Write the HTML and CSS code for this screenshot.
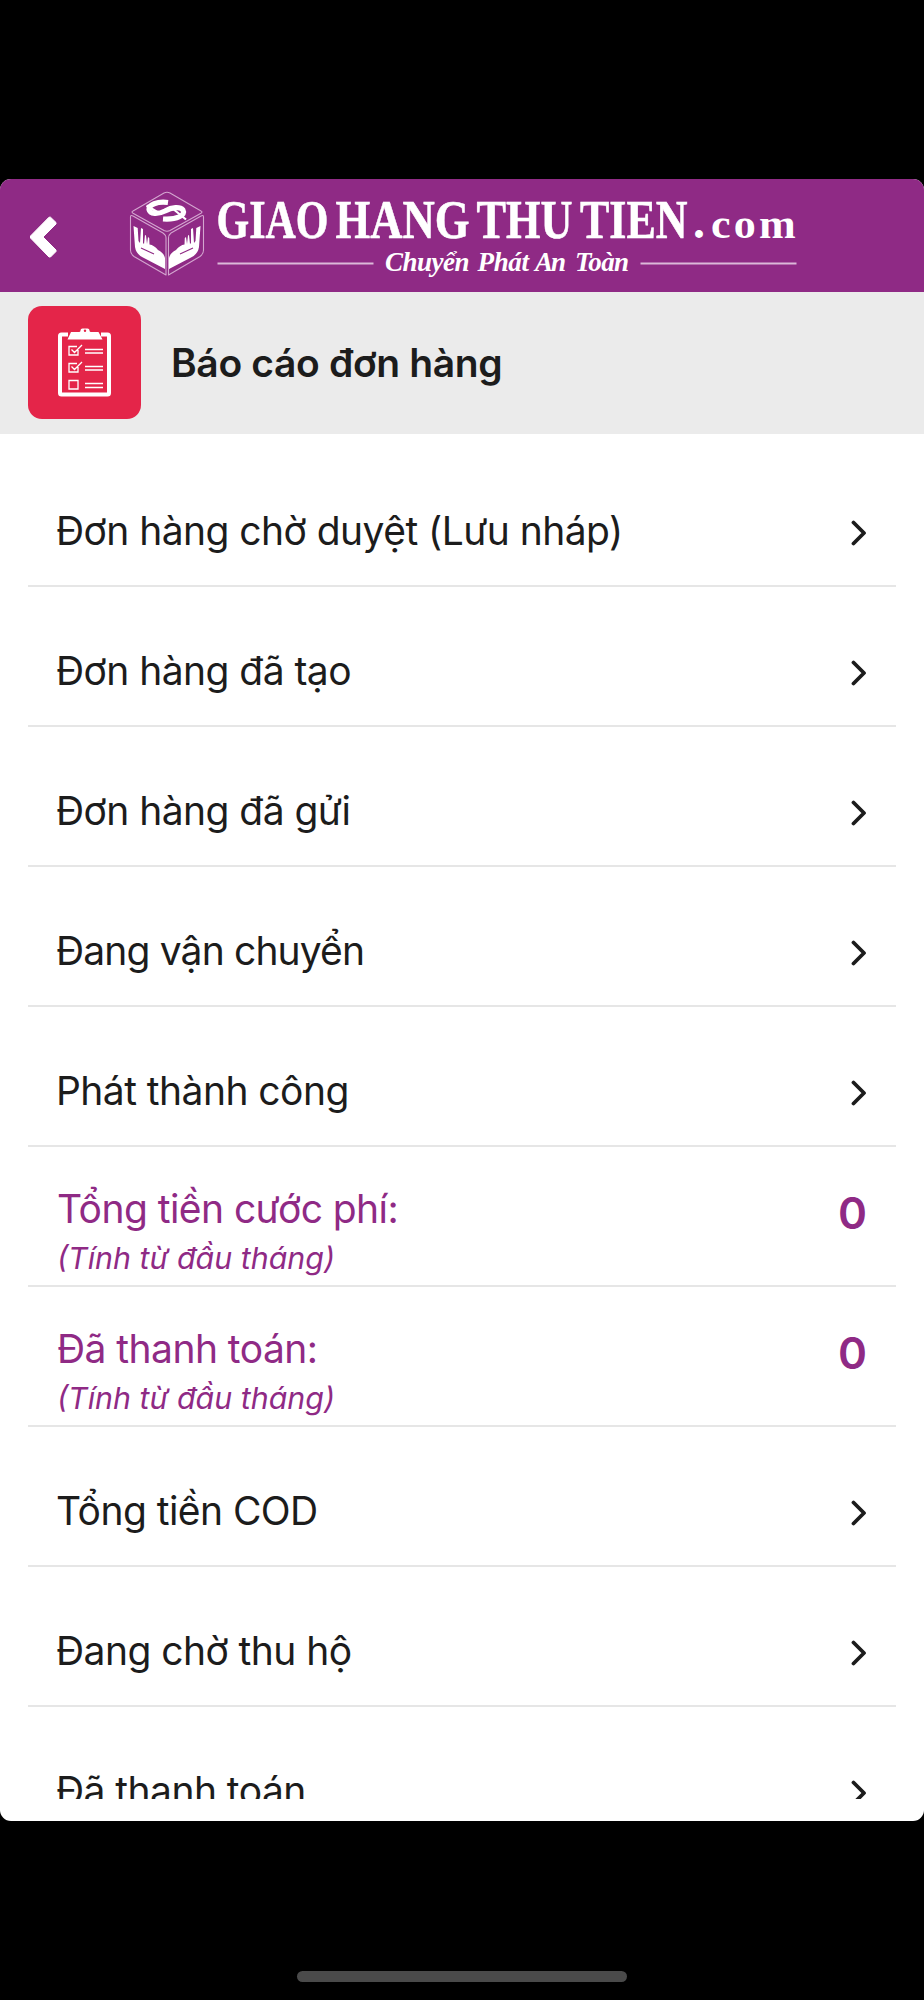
FILE: index.html
```
<!DOCTYPE html>
<html lang="vi">
<head>
    <meta charset="UTF-8">
    <meta name="viewport" content="width=device-width, initial-scale=1.0">
    <title>Báo cáo đơn hàng</title>
    <link rel="stylesheet" href="styles.css">
</head>
<body>
<div class="app">
    <header class="header">
        <svg class="back" viewBox="0 0 28 42" width="28" height="42">
            <path d="M20.5 1.2 L26 6.5 L26 8 L13 21 L26 34 L26 35.500 L20.500 41 L19 41 L0.500 22 L0.500 20 L19 1.200 Z" fill="#fff" stroke="#fff" stroke-linejoin="round"/>
        </svg>
        <svg class="logo" viewBox="128 185 672 100" width="672" height="100">
            <!-- box -->
            <g fill="none" stroke="#d3a5cf" stroke-width="1.1" stroke-linejoin="round">
                <path d="M164 193 Q167 191.500 170 193 L201 211 Q203 212 201 213.200 L170 230.500 Q167 232 164 230.500 L133 213.200 Q131 212 133 211 Z"/>
                <path d="M130.500 217 Q130.500 214.500 133 216 L163 233 Q166 235 166 238 L166 275 L134 256.500 Q130.500 254 130.500 250 Z"/>
                <path d="M203.500 217 Q203.500 214.500 201 216 L171 233 Q168.500 235 168.500 238 L168.500 275 L200 256.500 Q203.500 254 203.500 250 Z"/>
            </g>
            <!-- dollar sign lying on the lid -->
            <g fill="none" stroke="#fff">
                <path d="M168 202.500 C157 201 148.500 205 149 209.500 C150 214.500 158 214.500 165 211 C172 207 180 206.500 183 210 C186 215 177 220 163 219" stroke-width="5.200"/>
                <path d="M146.500 205.500 L159 213 M172 208 L186 219.500" stroke-width="2.200"/>
            </g>
            <!-- hands -->
            <g fill="#fff">
                <path d="M133.500 226 L137.700 228 L138.500 241 L140 243 L141 228 L143 229 L143 243 L144 244 L145 235 L146 235.500 L147 244 L148 237 L149.200 238 L149.500 244.500 Q154 245 158 250 Q164 253 165 258 L165 269 L143 257.500 Q136 254 135 247 Z"/>
                <path d="M200.500 226 L196.300 228 L195.500 241 L194 243 L193 228 L191 229 L191 243 L190 244 L189 235 L188 235.500 L187 244 L186 237 L184.800 238 L184.500 244.500 Q180 245 176 250 Q170 253 169 258 L169 269 L191 257.500 Q198 254 199 247 Z"/>
            </g>
            <path d="M141 248 L154 254 M193 248 L180 254" stroke="#8f2a85" stroke-width="1.200"/>
            <g class="brand">
                <text x="216.500" y="237.500" textLength="112" lengthAdjust="spacingAndGlyphs">GIAO</text>
                <text x="335.500" y="237.500" textLength="134" lengthAdjust="spacingAndGlyphs">HANG</text>
                <text x="476.500" y="237.500" textLength="96" lengthAdjust="spacingAndGlyphs">THU</text>
                <text x="580" y="237.500" textLength="107.500" lengthAdjust="spacingAndGlyphs">TIEN</text>
            </g>
            <text class="dot" x="693" y="238">.</text>
            <text class="domain" x="711" y="238" textLength="88" lengthAdjust="spacingAndGlyphs">com</text>
            <g class="slogan">
                <text x="385" y="271" textLength="84.500">Chuyển</text>
                <text x="477.500" y="271" textLength="51.500">Phát</text>
                <text x="535" y="271" textLength="31">An</text>
                <text x="575" y="271" textLength="54">Toàn</text>
            </g>
            <path d="M217.500 263.500 H373.500 M640.500 263.500 H796.500" stroke="#dcb8d9" stroke-width="2"/>
        </svg>
    </header>

    <div class="title-bar">
        <div class="title-icon">
            <svg viewBox="0 0 56 72" width="56" height="72">
                <path d="M11 7.500 H4.500 Q3 7.500 3 9 V66 Q3 67.500 4.500 67.500 H50.500 Q52 67.500 52 66 V9 Q52 7.500 50.500 7.500 H44" fill="none" stroke="#fff" stroke-width="4"/>
                <path d="M10.500 12.500 L14 5 H22 Q23.500 5 23.500 3.500 Q23.500 1.500 25.500 1.500 H30.500 Q32.500 1.500 32.500 3.500 Q32.500 5 34 5 H41.500 L45.500 12.500 Z" fill="#fff"/>
                <circle cx="28" cy="3.800" r="1.200" fill="#e42549"/>
                <g fill="none" stroke="#fff" stroke-width="1.300">
                    <path d="M21 23 V28 H12 V19.500 H20 M14.500 22.500 L17.500 25.500 L25 18"/>
                    <path d="M21 40 V45 H12 V36.500 H20 M14.500 39.500 L17.500 42.500 L25 35"/>
                    <path d="M12 53.500 H21 V62 H12 Z"/>
                    <path d="M28 22.500 H46 M28 26 H46 M28 39.500 H46 M28 43 H46 M28 56.500 H46 M28 60.500 H46"/>
                </g>
            </svg>
        </div>
        <h1>Báo cáo đơn hàng</h1>
    </div>

    <div class="list">
        <div class="row">
            <span class="label">Đơn hàng chờ duyệt (Lưu nháp)</span>
            <svg class="arrow" viewBox="0 0 16 26" width="16" height="26"><path d="M2.500 2.500 L13 13 L2.500 23.500"/></svg>
        </div>
        <div class="row">
            <span class="label">Đơn hàng đã tạo</span>
            <svg class="arrow" viewBox="0 0 16 26" width="16" height="26"><path d="M2.500 2.500 L13 13 L2.500 23.500"/></svg>
        </div>
        <div class="row">
            <span class="label">Đơn hàng đã gửi</span>
            <svg class="arrow" viewBox="0 0 16 26" width="16" height="26"><path d="M2.500 2.500 L13 13 L2.500 23.500"/></svg>
        </div>
        <div class="row">
            <span class="label tight">Đang vận chuyển</span>
            <svg class="arrow" viewBox="0 0 16 26" width="16" height="26"><path d="M2.500 2.500 L13 13 L2.500 23.500"/></svg>
        </div>
        <div class="row">
            <span class="label">Phát thành công</span>
            <svg class="arrow" viewBox="0 0 16 26" width="16" height="26"><path d="M2.500 2.500 L13 13 L2.500 23.500"/></svg>
        </div>
        <div class="row total">
            <div>
                <div class="label">Tổng tiền cước phí:</div>
                <div class="note">(Tính từ đầu tháng)</div>
            </div>
            <span class="value">0</span>
        </div>
        <div class="row total">
            <div>
                <div class="label">Đã thanh toán:</div>
                <div class="note">(Tính từ đầu tháng)</div>
            </div>
            <span class="value">0</span>
        </div>
        <div class="row">
            <span class="label">Tổng tiền COD</span>
            <svg class="arrow" viewBox="0 0 16 26" width="16" height="26"><path d="M2.500 2.500 L13 13 L2.500 23.500"/></svg>
        </div>
        <div class="row">
            <span class="label">Đang chờ thu hộ</span>
            <svg class="arrow" viewBox="0 0 16 26" width="16" height="26"><path d="M2.500 2.500 L13 13 L2.500 23.500"/></svg>
        </div>
        <div class="row">
            <span class="label">Đã thanh toán</span>
            <svg class="arrow" viewBox="0 0 16 26" width="16" height="26"><path d="M2.500 2.500 L13 13 L2.500 23.500"/></svg>
        </div>
    </div>
</div>
<div class="home-bar"></div>
</body>
</html>
```
FILE: styles.css
```
* {
    box-sizing: border-box;
}

body {
    margin: 0;
    padding-top: 179px;
    height: 2000px;
    background: #000;
    font-family: 'Inter', sans-serif;
    color: #1c1c1c;
    overflow: hidden;
}

.app {
    height: 1642px;
    background: #fff;
    border-radius: 11px;
    overflow: hidden;
}

.header {
    display: flex;
    height: 113px;
    padding: 6px 0 0 30px;
    background: #8f2a85;
}

.back {
    margin: 31px 70px 0 0;
    flex: none;
}

.logo {
    flex: none;
}

.brand,
.dot,
.domain,
.slogan {
    font-family: 'Liberation Serif', serif;
    font-weight: bold;
    fill: #fff;
}

.brand {
    font-size: 55px;
    stroke: #fff;
    stroke-width: 0.6;
}

.dot {
    font-size: 48px;
}

.domain {
    font-size: 41px;
    letter-spacing: 3px;
}

.slogan {
    font-size: 27px;
    font-style: italic;
}

.title-bar {
    display: flex;
    align-items: center;
    height: 142px;
    padding: 0 28px;
    background: #ebebeb;
}

.title-icon {
    display: flex;
    align-items: center;
    justify-content: center;
    width: 113px;
    height: 113px;
    margin: 0 30px 1px 0;
    border-radius: 14px;
    background: #e42549;
}

h1 {
    margin: 0 0 2px;
    font-size: 39px;
    font-weight: 600;
    letter-spacing: -0.35px;
}

.list {
    height: 1365px;
    padding: 13px 28px 0;
    overflow: hidden;
}

.row {
    display: flex;
    align-items: center;
    justify-content: space-between;
    height: 140px;
    padding: 28px 29px 0 28px;
    border-bottom: 2px solid #e6e6e6;
}

.label {
    font-size: 39px;
    letter-spacing: -0.55px;
    white-space: nowrap;
}

.tight {
    letter-spacing: -0.85px;
}

.arrow {
    margin-top: 5px;
    fill: none;
    stroke: #1c1c1c;
    stroke-width: 3.8;
    stroke-linecap: round;
    stroke-linejoin: round;
}

.total {
    align-items: flex-start;
    padding-left: 29px;
    color: #8f2a85;
}

.total .label {
    margin-top: 11px;
    line-height: 46px;
}

.note {
    margin-top: 7px;
    font-size: 30.4px;
    font-style: italic;
    line-height: 38px;
}

.value {
    margin: 11px 0 0;
    font-size: 44px;
    font-weight: 600;
    line-height: 54px;
}

.home-bar {
    width: 330px;
    height: 11px;
    margin: 150px auto 0;
    border-radius: 6px;
    background: #4a4a4a;
}
```
